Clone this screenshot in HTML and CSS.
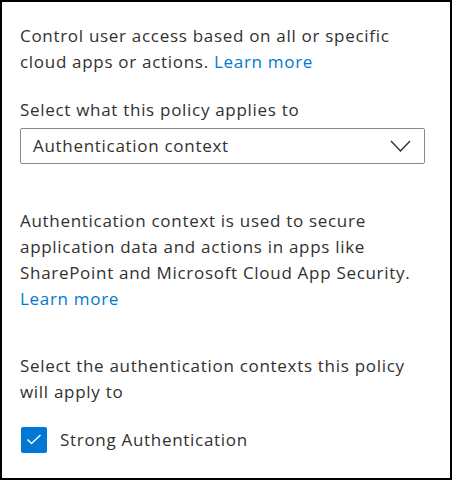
FILE: index.html
```html
<!DOCTYPE html>
<html>
<head>
<meta charset="utf-8">
<link rel="stylesheet" href="styles.css">
</head>
<body>
<div class="panel">
  <p class="text intro">Control user access based on all or specific cloud apps or actions. <a class="link" href="#">Learn more</a></p>
  <div class="field">
    <div class="text">Select what this policy applies to</div>
    <div class="select">
      <span class="select-value">Authentication context</span>
      <svg class="chevron" width="21" height="12" viewBox="0 0 21 12"><polyline points="1,1 10.5,11 20,1" fill="none" stroke="#323130" stroke-width="1.4"/></svg>
    </div>
  </div>
  <p class="text desc">Authentication context is used to secure application data and actions in apps like SharePoint and Microsoft Cloud App Security. <a class="link" href="#">Learn more</a></p>
  <p class="text contexts">Select the authentication contexts this policy will apply to</p>
  <div class="check">
    <span class="box"><svg width="26" height="26" viewBox="0 0 26 26"><polyline points="6.5,12.5 10.5,16.5 19.5,8" fill="none" stroke="#fff" stroke-width="1.5"/></svg></span>
    <span class="text">Strong Authentication</span>
  </div>
</div>
</body>
</html>
```
FILE: styles.css
```css
html, body { margin: 0; padding: 0; background: #fff; }
.panel {
  box-sizing: border-box;
  width: 452px;
  height: 480px;
  border: 2px solid #000;
  padding: 21px 25px 0 18px;
  font-family: "Open Sans", sans-serif;
  font-size: 17px;
  letter-spacing: 0.7px;
  color: #323130;
}
.text { margin: 0; line-height: 26px; }
.link { color: #0078d4; text-decoration: none; }
.intro { margin-bottom: 22px; }
.field { display: flex; flex-direction: column; gap: 5px; }
.select {
  box-sizing: border-box;
  height: 36px;
  border: 1px solid #8a8886;
  border-radius: 2px;
  display: flex;
  align-items: center;
  justify-content: space-between;
  padding: 0 13px 0 12px;
}
.select-value { line-height: 26px; }
.chevron { display: block; }
.desc { margin-top: 44px; }
.contexts { margin-top: 41px; }
.check { display: flex; align-items: center; gap: 13px; margin-top: 22px; }
.box {
  width: 26px; height: 26px;
  background: #0078d4;
  border-radius: 2px;
  display: block;
  margin-left: 1px;
}
.box svg { display: block; }
```
